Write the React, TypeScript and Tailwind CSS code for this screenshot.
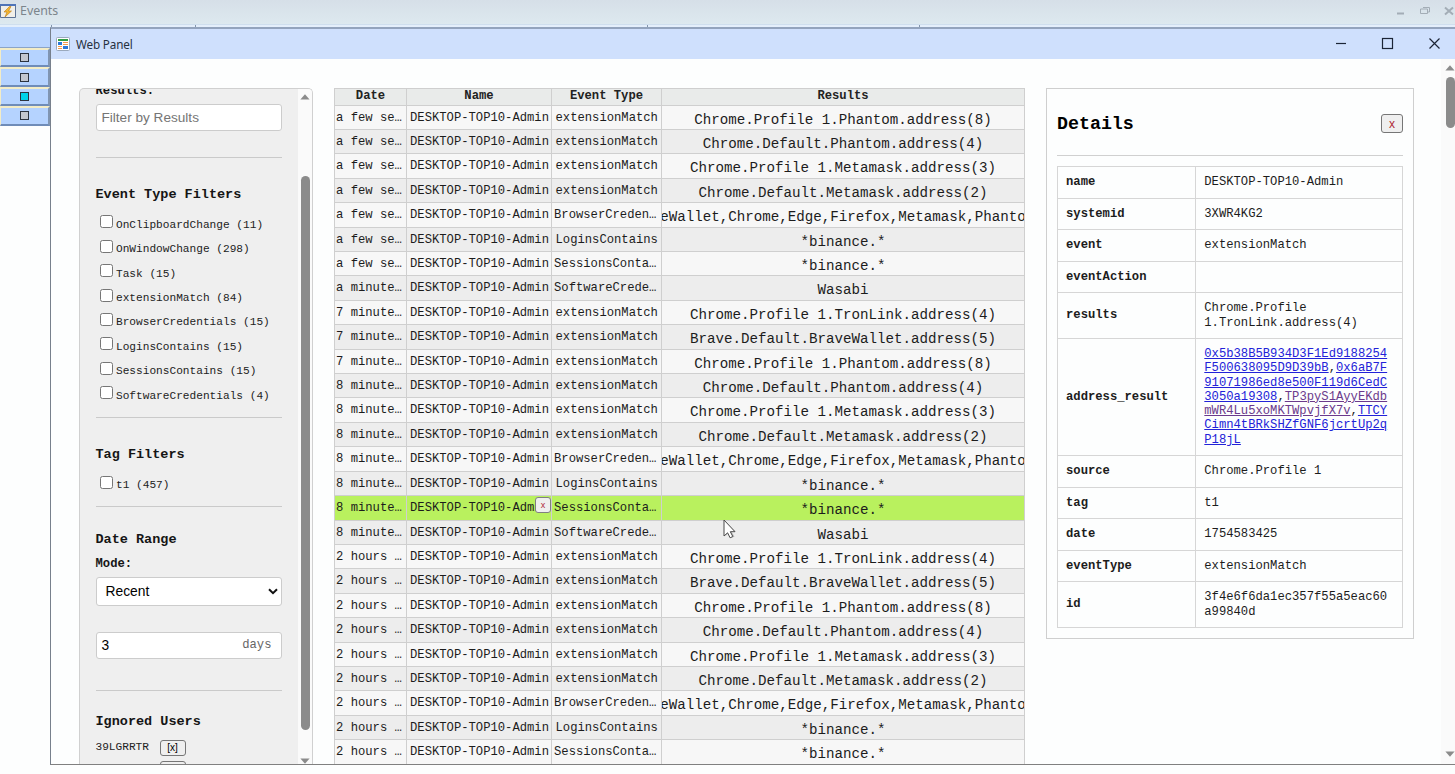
import type { ReactNode } from 'react'

const MONO = "font-['Courier_New','Liberation_Mono',monospace]"

const EVENT_TYPES = [
  'OnClipboardChange (11)',
  'OnWindowChange (298)',
  'Task (15)',
  'extensionMatch (84)',
  'BrowserCredentials (15)',
  'LoginsContains (15)',
  'SessionsContains (15)',
  'SoftwareCredentials (4)',
]

const MATCH = 'extensionMatch'
const BROWSER = ['BrowserCreden…', 'eWallet,Chrome,Edge,Firefox,Metamask,Phanto']
const LOGINS = ['LoginsContains', '*binance.*']
const SESSIONS = ['SessionsConta…', '*binance.*']
const SOFTWARE = ['SoftwareCrede…', 'Wasabi']
const PHANTOM_P1 = [MATCH, 'Chrome.Profile 1.Phantom.address(8)']
const PHANTOM = [MATCH, 'Chrome.Default.Phantom.address(4)']
const METAMASK_P1 = [MATCH, 'Chrome.Profile 1.Metamask.address(3)']
const METAMASK = [MATCH, 'Chrome.Default.Metamask.address(2)']
const TRON = [MATCH, 'Chrome.Profile 1.TronLink.address(4)']
const BRAVE = [MATCH, 'Brave.Default.BraveWallet.address(5)']

const GROUPS = [
  { date: 'a few se…', items: [PHANTOM_P1, PHANTOM, METAMASK_P1, METAMASK, BROWSER, LOGINS, SESSIONS] },
  { date: 'a minute…', items: [SOFTWARE] },
  { date: '7 minute…', items: [TRON, BRAVE, PHANTOM_P1] },
  { date: '8 minute…', items: [PHANTOM, METAMASK_P1, METAMASK, BROWSER, LOGINS, SESSIONS, SOFTWARE] },
  { date: '2 hours …', items: [TRON, BRAVE, PHANTOM_P1, PHANTOM, METAMASK_P1, METAMASK, BROWSER, LOGINS, SESSIONS] },
]

const ROWS = GROUPS.flatMap((g) => g.items.map(([type, result]) => ({ date: g.date, type, result })))
const SELECTED = 16

function Arrow({ down }: { down?: boolean }) {
  return (
    <svg width="10" height="6" viewBox="0 0 10 6" className={down ? 'shrink-0 rotate-180' : 'shrink-0'}>
      <path d="M5 0.3 9.6 5.5H0.4Z" fill="#8b8b8b" />
    </svg>
  )
}

function Rule({ className }: { className: string }) {
  return <div className={`h-px shrink-0 bg-[#cacaca] ${className}`} />
}

function Heading({ className, children }: { className: string; children: ReactNode }) {
  return <h3 className={`h-4 shrink-0 text-[13.5px] leading-[17px] font-bold text-[#151515] ${className}`}>{children}</h3>
}

function Check({ label }: { label: string }) {
  return (
    <label className="flex h-[24.42px] shrink-0 items-center pl-[4.5px] text-[11.15px] text-[#222]">
      <input
        type="checkbox"
        className="mr-[3px] size-[13px] appearance-none rounded-[2.5px] border border-[#767676] bg-white"
      />
      <span className="relative top-[3.3px] whitespace-pre">{label}</span>
    </label>
  )
}

function Sidebar() {
  return (
    <aside className="flex w-[234px] overflow-hidden rounded-t-[5px] border border-b-0 border-[#d0d0d0] bg-[#efefef]">
      <div className="flex min-w-0 flex-1 flex-col overflow-hidden pr-[16.5px] pl-[15.5px]">
        <div className="-mt-[5px] h-3.5 shrink-0 text-[12.2px] leading-[15px] font-bold text-[#151515]">Results:</div>
        <input
          className="mt-[6px] h-[27px] w-full shrink-0 rounded-[3px] border border-[#ccc] bg-white px-[5px] font-['Liberation_Sans',Arial,sans-serif] text-[13.6px] placeholder:text-[#757575]"
          placeholder="Filter by Results"
        />
        <Rule className="mt-[25.5px]" />

        <Heading className="mt-[28.5px] mb-[7.6px]">Event Type Filters</Heading>
        {EVENT_TYPES.map((label) => (
          <Check key={label} label={label} />
        ))}
        <Rule className="mt-[12px]" />

        <Heading className="mt-[28.5px] mb-[8px]">Tag Filters</Heading>
        <Check label="t1 (457)" />
        <Rule className="mt-[11.5px]" />

        <Heading className="mt-[24px]">Date Range</Heading>
        <div className="mt-[9.5px] h-3.5 shrink-0 text-[12.2px] leading-[15px] font-bold text-[#151515]">Mode:</div>
        <div className="mt-[6px] flex h-[29px] shrink-0 items-center justify-between rounded-[3px] border border-[#ccc] bg-white pr-[3px] pl-[9px] font-['Liberation_Sans',Arial,sans-serif] text-[13.8px] text-black">
          <span className="pt-[2px]">Recent</span>
          <svg width="10" height="7" viewBox="0 0 10 7">
            <path d="M1 1.2 5 5.2 9 1.2" fill="none" stroke="#111" strokeWidth="2" />
          </svg>
        </div>
        <div className="mt-[26px] flex h-[27px] shrink-0 items-center justify-between rounded-[3px] border border-[#ccc] bg-white pr-[9px] pl-[5px]">
          <span className="pt-[2px] font-['Liberation_Sans',Arial,sans-serif] text-[13.8px] text-black">3</span>
          <span className="text-[12.2px] text-[#666]">days</span>
        </div>
        <Rule className="mt-[31px]" />

        <Heading className="mt-[22.5px]">Ignored Users</Heading>
        <div className="mt-[10.5px] flex h-4 shrink-0 items-center text-[11.15px] text-[#222]">
          <span className="w-[64px]">39LGRRTR</span>
          <button className="h-4 w-[26px] rounded-[3px] border border-[#767676] bg-[#efefef] font-['Liberation_Sans',Arial,sans-serif] text-[10px] leading-[14px] text-black">
            [x]
          </button>
        </div>
        <div className="mt-[5.5px] ml-[64px] h-4 w-[26px] shrink-0 rounded-[3px] border border-[#767676]" />
      </div>
      <div className="flex w-[14px] flex-col items-center bg-[#fafafa] pt-[5px]">
        <Arrow />
        <div className="mt-[76px] h-[554px] w-[9px] rounded-full bg-[#8b8b8b]" />
        <div className="mt-[28px]">
          <Arrow down />
        </div>
      </div>
    </aside>
  )
}

function EventsTable() {
  return (
    <section className="w-[691px] overflow-hidden border-t border-l border-[#cfcfcf]">
      <div className="grid h-[16.6px] grid-cols-[72px_145px_110px_363px] text-center text-[12.2px] leading-[15px] font-bold text-[#222]">
        {['Date', 'Name', 'Event Type', 'Results'].map((h) => (
          <div key={h} className="border-r border-b border-[#cfcfcf] bg-[#e9ebea]">
            {h}
          </div>
        ))}
      </div>
      {ROWS.map((row, i) => {
        const bg = i === SELECTED ? 'bg-[#b9f15e]' : i % 2 ? 'bg-[#ededed]' : 'bg-[#f7f7f7]'
        return (
          <div
            key={i}
            className="relative grid h-[24.42px] grid-cols-[72px_145px_110px_363px] grid-rows-1 text-[12.2px] leading-[25px] whitespace-pre text-[#1c1c1c]"
          >
            <div className={`border-r border-b border-[#cfcfcf] pl-px ${bg}`}>{row.date}</div>
            <div className={`border-r border-b border-[#cfcfcf] pl-[3px] ${bg}`}>DESKTOP-TOP10-Admin</div>
            <div
              className={`border-r border-b border-[#cfcfcf] ${bg} ${row.type.endsWith('…') ? 'pl-[2px]' : 'pl-[3.5px]'}`}
            >
              {row.type}
            </div>
            <div
              className={`flex justify-center overflow-hidden border-r border-b border-[#cfcfcf] text-[14.18px] leading-[29px] ${bg}`}
            >
              {row.result}
            </div>
            {i === SELECTED && (
              <button className="absolute top-[1px] left-[200px] size-[16px] rounded-[3px] border border-[#808080] bg-[#efefef] font-['Liberation_Sans',Arial,sans-serif] text-[9px] leading-[13px] text-[#b02a37]">
                x
              </button>
            )}
          </div>
        )
      })}
    </section>
  )
}

function A({ visited, children }: { visited?: boolean; children: string }) {
  return <a className={visited ? 'text-[#6b3a8c] underline' : 'text-[#2222d8] underline'}>{children}</a>
}

const DETAILS: [string, string, ReactNode][] = [
  ['name', 'h-[31.5px]', 'DESKTOP-TOP10-Admin'],
  ['systemid', 'h-[31.5px]', '3XWR4KG2'],
  ['event', 'h-[31.5px]', 'extensionMatch'],
  ['eventAction', 'h-[31.5px]', ''],
  ['results', 'h-[46px]', 'Chrome.Profile 1.TronLink.address(4)'],
  [
    'address_result',
    'h-[117px]',
    <>
      <A>0x5b38B5B934D3F1Ed9188254F500638095D9D39bB</A>,<A>0x6aB7F91071986ed8e500F119d6CedC3050a19308</A>,
      <A visited>TP3pyS1AyyEKdbmWR4Lu5xoMKTWpvjfX7v</A>,<A>TTCYCimn4tBRkSHZfGNF6jcrtUp2qP18jL</A>
    </>,
  ],
  ['source', 'h-[31.5px]', 'Chrome.Profile 1'],
  ['tag', 'h-[31.5px]', 't1'],
  ['date', 'h-[31.5px]', '1754583425'],
  ['eventType', 'h-[31.5px]', 'extensionMatch'],
  ['id', 'h-[46px]', '3f4e6f6da1ec357f55a5eac60a99840d'],
]

function Details() {
  return (
    <section className="h-[551px] w-[368px] border border-[#cfcfcf] px-[10px]">
      <header className="flex h-[67px] items-center justify-between border-b border-[#d0d0d0] pt-[3px]">
        <h2 className="pt-[2px] text-[18.3px] font-bold text-black">Details</h2>
        <button className="h-[19px] w-[22px] rounded-[3px] border border-[#767676] bg-[#efefef] font-['Liberation_Sans',Arial,sans-serif] text-[12px] leading-[16px] text-[#b02a37]">
          x
        </button>
      </header>
      <div className="mt-[10px] border-t border-l border-[#d6d6d6] text-[12.2px] leading-[14.3px] text-[#1c1c1c]">
        {DETAILS.map(([key, height, value]) => (
          <div key={key} className={`flex ${height}`}>
            <div className="flex w-[138px] items-center border-r border-b border-[#d6d6d6] pl-[8px] font-bold">{key}</div>
            <div className="flex min-w-0 flex-1 items-center border-r border-b border-[#d6d6d6] pr-[14px] pl-[8.3px]">
              <div className="w-[184px] [overflow-wrap:anywhere]">{value}</div>
            </div>
          </div>
        ))}
      </div>
    </section>
  )
}

function OuterTitle() {
  return (
    <header className="flex h-6 items-center justify-between bg-linear-to-b from-[#d6dfe8] to-[#dde9ef]">
      <div className="flex items-center pb-[2px]">
        <svg width="16" height="16" viewBox="0 0 16 16">
          <path d="M.5 1.500h15v13H.5z" fill="#f1efe9" stroke="#5d7396" />
          <path d="M0 1h16v2H0z" fill="#4f74b8" />
          <path d="M9.500 3.500 4 9h3L5 14l6.500-6H8.500L11 3.500Z" fill="#f5b731" stroke="#b97a18" strokeWidth=".6" />
        </svg>
        <span className="ml-[4px] font-['Noto_Sans',sans-serif] text-[12.4px] leading-4 text-[#7c858c]">Events</span>
      </div>
      <svg width="60" height="24" viewBox="0 0 60 24" fill="none" stroke="#a3adb6">
        <path d="M2 13.500h7" strokeWidth="2" />
        <path d="M28 7.500h6.500v4.500h-2M25.500 9h7v4.500h-7z" />
        <path d="M50 7.500l8 7M58 7.500l-8 7" strokeWidth="2" />
      </svg>
    </header>
  )
}

function LeftStrip() {
  return (
    <nav className="flex w-[50px] shrink-0 flex-col bg-[#fdfefe]">
      <div className="h-[21px] border-b border-[#8ba4c8] bg-[#b9d5ff]" />
      {[0, 1, 2, 3].map((n) => (
        <div
          key={n}
          className="flex h-[19.4px] items-center justify-center border-t-2 border-r-2 border-b-2 border-l border-t-[#f3ecc6] border-r-[#8095b2] border-b-[#6f8cb8] border-l-[#f3ecc6] bg-[#b5d3ff]"
        >
          <div className={`size-[9px] border-[1.5px] border-[#2c3440] ${n === 2 ? 'bg-[#00d3ea]' : 'bg-[#c3c7cf]'}`} />
        </div>
      ))}
    </nav>
  )
}

function WindowTitle() {
  return (
    <header className="flex h-[30px] shrink-0 items-center justify-between bg-[#cfe0fd]">
      <div className="flex items-center pb-px pl-[5px]">
        <svg width="14" height="14" viewBox="0 0 14 14">
          <rect x=".5" y=".5" width="13" height="13" rx="1" fill="#fff" stroke="#9aa9bd" />
          <path d="M2 2h10v2H2z" fill="#2f9e44" />
          <path d="M2 5h4v3H2zM7 9h5v3H7z" fill="#2a78d8" />
          <path d="M2 9h4v1H2zM2 11h4v1H2zM7 5h5v1H7zM7 7h5v1H7z" fill="#f19a4c" />
        </svg>
        <span className="ml-[6px] font-['Noto_Sans',sans-serif] text-[11.7px] leading-4 tracking-[-0.15px] text-[#26303f]">
          Web Panel
        </span>
      </div>
      <svg width="124" height="30" viewBox="0 0 124 30" fill="none" stroke="#1c2536" strokeWidth="1.200">
        <path d="M5 14.500h10" />
        <rect x="51.500" y="9.500" width="10" height="10" />
        <path d="M98.500 9.500l10 10M108.500 9.500l-10 10" />
      </svg>
    </header>
  )
}

export default function App() {
  return (
    <div className={`relative flex h-[774px] w-[1455px] flex-col overflow-hidden bg-[#fdfefe] ${MONO}`}>
      <OuterTitle />
      <div className="flex h-[3px] shrink-0 border-t border-[#cfdfee] bg-[#e4effb]">
        <div className="w-[52px] border-r border-[#8496ac]" />
        <div className="w-[144px] border-r border-[#8496ac]" />
        <div className="w-[452px] border-r border-[#8496ac]" />
        <div className="w-[272px] border-r border-[#8496ac]" />
      </div>
      <div className="flex h-[738px] shrink-0">
        <LeftStrip />
        <main className="flex min-w-0 flex-1 flex-col border-t-2 border-b border-l border-t-[#93a4bd] border-b-[#808080] border-l-[#77808c] bg-[#fdfefe]">
          <WindowTitle />
          <div className="flex min-h-0 flex-1">
            <div className="flex min-h-0 flex-1 gap-[21px] pt-[29px] pl-[28px]">
              <Sidebar />
              <EventsTable />
              <Details />
            </div>
            <div className="flex w-[14px] flex-col items-end bg-[#fafafa] pt-[6px]">
              <Arrow />
              <div className="mt-[6px] h-[51px] w-[9px] rounded-full bg-[#8b8b8b]" />
              <div className="mt-auto mb-[7px]">
                <Arrow down />
              </div>
            </div>
          </div>
        </main>
      </div>
      <svg className="absolute top-[519px] left-[723px]" width="15" height="22" viewBox="0 0 15 22">
        <path d="M2.500 3v14l3-3 3 5 3-1.500-3-5h4Z" fill="#000" opacity=".2" />
        <path d="M1 1v16l3.600-3.200 2.500 5 2.700-1.300-2.500-4.800H12Z" fill="#fff" stroke="#4a4a4a" />
      </svg>
    </div>
  )
}
